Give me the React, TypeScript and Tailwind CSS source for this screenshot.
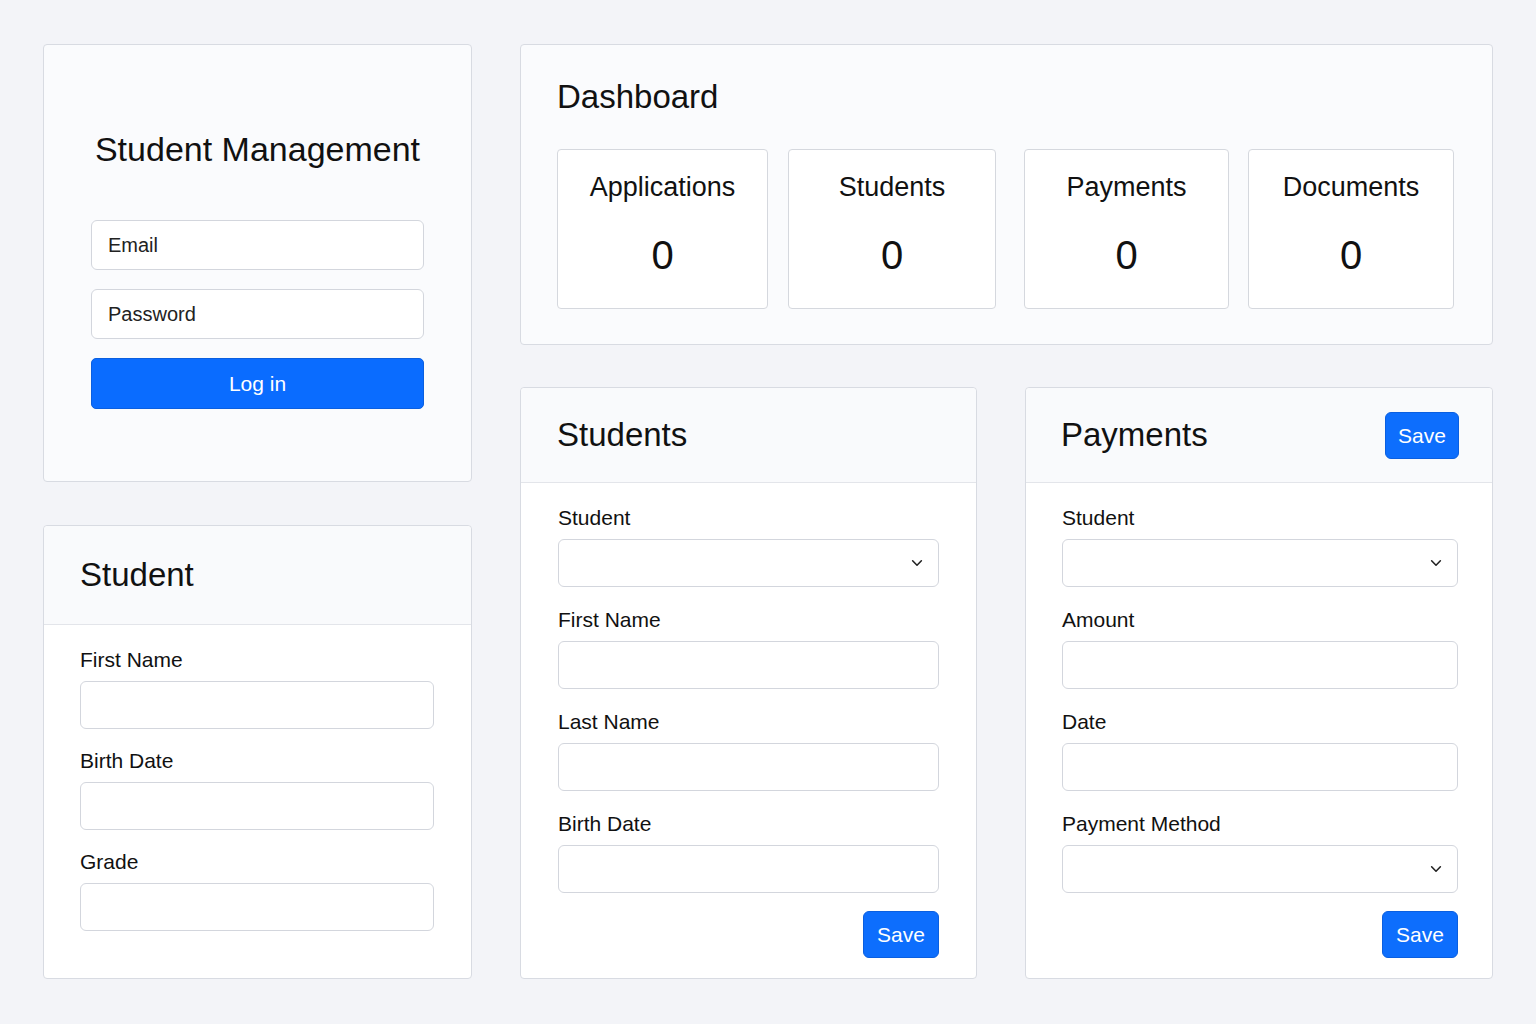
import React from "react";

const font = { fontFamily: '"Liberation Sans", Arial, Helvetica, sans-serif' };

function Chevron() {
  return (
    <svg width="14" height="14" viewBox="0 0 16 16" fill="none" className="text-[#222]">
      <path d="M3 5.5l5 5 5-5" stroke="currentColor" strokeWidth="1.8" strokeLinecap="round" strokeLinejoin="round" />
    </svg>
  );
}

function Field({ label, select, first, tight }: { label: string; select?: boolean; first?: boolean; tight?: boolean }) {
  return (
    <div className={first ? "" : tight ? "mt-[20px]" : "mt-[21px]"}>
      <div className="text-[21px] leading-[24px] text-[#111]">{label}</div>
      <div className="mt-[9px] h-[48px] rounded-[6px] border border-[#d3d6dd] bg-white flex items-center justify-end pr-[14px]">
        {select ? <Chevron /> : null}
      </div>
    </div>
  );
}

function SaveBtn() {
  return (
    <button className="h-[47px] w-[76px] rounded-[6px] bg-[#0d6efd] border border-[#0a5fe0] text-white text-[21px] leading-none">
      Save
    </button>
  );
}

function Stat({ label, className }: { label: string; className: string }) {
  return (
    <div className={"h-[160px] rounded-[4px] border border-[#d5d8de] bg-white flex flex-col items-center pt-[21px] " + className}>
      <div className="text-[27px] leading-[32px] text-[#111]">{label}</div>
      <div className="mt-[28px] text-[40px] leading-[48px] text-[#111]">0</div>
    </div>
  );
}

export default function App() {
  return (
    <div style={font} className="w-[1536px] h-[1024px] bg-[#f3f4f8] pt-[44px] px-[43px] pb-[45px] flex gap-[48px]">
      {/* Left column */}
      <div className="w-[429px] flex flex-col gap-[43px]">
        <div className="h-[438px] rounded-[4px] border border-[#d8dbe2] bg-[#fafbfd] pt-[84px] px-[47px]">
          <div className="text-center text-[34px] leading-[40px] text-[#111]">Student Management</div>
          <div className="mt-[51px] h-[50px] rounded-[6px] border border-[#d3d6dd] bg-white flex items-center pl-[16px] text-[20px] text-[#222]">
            Email
          </div>
          <div className="mt-[19px] h-[50px] rounded-[6px] border border-[#d3d6dd] bg-white flex items-center pl-[16px] text-[20px] text-[#222]">
            Password
          </div>
          <button className="mt-[19px] w-full h-[51px] rounded-[5px] bg-[#0a6cff] border border-[#0a5fe0] text-white text-[21px]">
            Log in
          </button>
        </div>
        <div className="flex-1 rounded-[4px] border border-[#d8dbe2] bg-white flex flex-col">
          <div className="h-[99px] shrink-0 border-b border-[#e3e5ea] bg-[#f9fafc] rounded-t-[4px] flex items-center px-[36px]">
            <div className="text-[33px] leading-[40px] text-[#111]">Student</div>
          </div>
          <div className="pt-[23px] pl-[36px] pr-[37px]">
            <Field label="First Name" first />
            <Field label="Birth Date" tight />
            <Field label="Grade" tight />
          </div>
        </div>
      </div>

      {/* Right column */}
      <div className="flex-1 flex flex-col gap-[42px]">
        <div className="h-[301px] rounded-[4px] border border-[#d8dbe2] bg-[#fafbfd] pt-[32px] pl-[36px] pr-[38px]">
          <div className="text-[33px] leading-[40px] text-[#111]">Dashboard</div>
          <div className="mt-[32px] flex">
            <Stat label="Applications" className="w-[211px]" />
            <Stat label="Students" className="w-[208px] ml-[20px]" />
            <Stat label="Payments" className="w-[205px] ml-[28px]" />
            <Stat label="Documents" className="w-[206px] ml-[19px]" />
          </div>
        </div>
        <div className="flex-1 grid grid-cols-[457px_1fr] gap-[48px]">
          <div className="rounded-[4px] border border-[#d8dbe2] bg-white flex flex-col">
            <div className="h-[95px] shrink-0 border-b border-[#e3e5ea] bg-[#f9fafc] rounded-t-[4px] flex items-center px-[36px]">
              <div className="text-[33px] leading-[40px] text-[#111]">Students</div>
            </div>
            <div className="pt-[23px] pl-[37px] pr-[37px]">
              <Field label="Student" select first />
              <Field label="First Name" />
              <Field label="Last Name" />
              <Field label="Birth Date" />
              <div className="mt-[18px] flex justify-end">
                <SaveBtn />
              </div>
            </div>
          </div>
          <div className="rounded-[4px] border border-[#d8dbe2] bg-white flex flex-col">
            <div className="h-[95px] shrink-0 border-b border-[#e3e5ea] bg-[#f9fafc] rounded-t-[4px] flex items-center justify-between pl-[35px] pr-[33px]">
              <div className="text-[33px] leading-[40px] text-[#111]">Payments</div>
              <button className="h-[47px] w-[74px] rounded-[6px] bg-[#0d6efd] border border-[#0a5fe0] text-white text-[21px] leading-none">
                Save
              </button>
            </div>
            <div className="pt-[23px] pl-[36px] pr-[34px]">
              <Field label="Student" select first />
              <Field label="Amount" />
              <Field label="Date" />
              <Field label="Payment Method" select />
              <div className="mt-[18px] flex justify-end">
                <SaveBtn />
              </div>
            </div>
          </div>
        </div>
      </div>
    </div>
  );
}
